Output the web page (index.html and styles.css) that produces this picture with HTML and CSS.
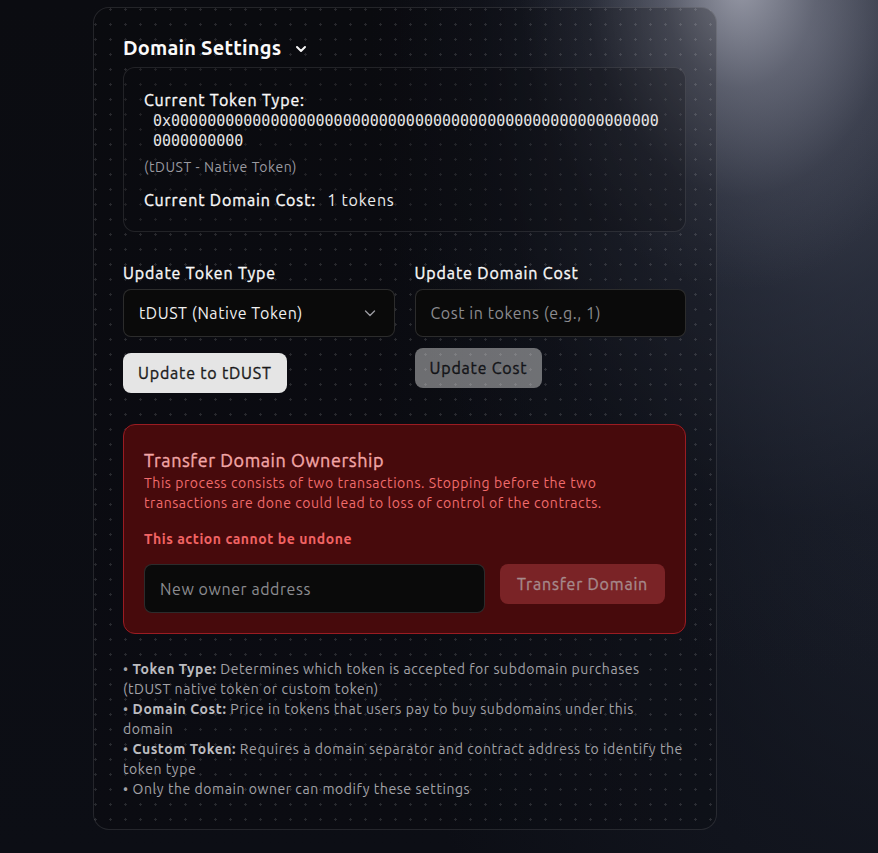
FILE: index.html
```html
<!DOCTYPE html>
<html lang="en">
<head>
<meta charset="utf-8">
<title>Domain Settings</title>
<link rel="stylesheet" href="styles.css">
</head>
<body>
<div class="page">
  <section class="card">
    <div class="card-head">
      <h2 class="card-title">Domain Settings</h2>
      <svg class="head-chevron" width="16" height="16" viewBox="0 0 16 16" fill="none" stroke="currentColor" stroke-width="2" stroke-linecap="round" stroke-linejoin="round"><path d="M4 6l4 4 4-4"/></svg>
    </div>

    <div class="current">
      <div class="cur-label medium">Current Token Type:</div>
      <div class="hex">0x0000000000000000000000000000000000000000000000000000000000000000</div>
      <div class="muted">(tDUST - Native Token)</div>
      <div class="cost-row"><span class="cur-label medium">Current Domain Cost:</span><span class="cost-value">1 tokens</span></div>
    </div>

    <div class="update-grid">
      <div class="col">
        <div class="field-label medium">Update Token Type</div>
        <div class="select">
          <span>tDUST (Native Token)</span>
          <svg width="14" height="14" viewBox="0 0 14 14" fill="none" stroke="currentColor" stroke-width="1.4" stroke-linecap="round" stroke-linejoin="round"><path d="M2.5 5l4.5 4.5L11.5 5"/></svg>
        </div>
        <button class="btn btn-light btn-token medium">Update to tDUST</button>
      </div>
      <div class="col">
        <div class="field-label medium">Update Domain Cost</div>
        <input class="input" type="text" placeholder="Cost in tokens (e.g., 1)">
        <button class="btn btn-light btn-disabled btn-cost medium">Update Cost</button>
      </div>
    </div>

    <div class="danger">
      <h3 class="danger-title medium">Transfer Domain Ownership</h3>
      <p class="danger-desc">This process consists of two transactions. Stopping before the two transactions are done could lead to loss of control of the contracts.</p>
      <p class="danger-warn">This action cannot be undone</p>
      <div class="danger-row">
        <input class="input owner-input" type="text" placeholder="New owner address">
        <button class="btn btn-transfer medium">Transfer Domain</button>
      </div>
    </div>

    <div class="notes">
      <p><span class="bullet">•</span><b>Token Type:</b> Determines which token is accepted for subdomain purchases (tDUST native token or custom token)</p>
      <p><span class="bullet">•</span><b>Domain Cost:</b> Price in tokens that users pay to buy subdomains under this domain</p>
      <p><span class="bullet">•</span><b>Custom Token:</b> Requires a domain separator and contract address to identify the token type</p>
      <p><span class="bullet">•</span>Only the domain owner can modify these settings</p>
    </div>
  </section>
</div>
</body>
</html>
```

FILE: styles.css
```css
* { box-sizing: border-box; }

html, body {
  margin: 0;
  padding: 0;
  height: 100%;
}

body {
  font-family: "Ubuntu", "Noto Sans", "Open Sans", sans-serif;
  letter-spacing: 0.035em;
  color: #f5f5f5;
  background-color: #0b0c11;
  background-image:
    radial-gradient(ellipse 220px 310px at 740px -20px, rgba(185,187,200,0.75) 0%, rgba(140,143,158,0.45) 35%, rgba(90,94,110,0.18) 70%, rgba(0,0,0,0) 100%),
    radial-gradient(ellipse 440px 640px at 810px 40px, rgba(80,84,100,0.75) 0%, rgba(50,55,70,0.55) 40%, rgba(26,30,42,0.25) 75%, rgba(14,17,26,0) 100%),
    radial-gradient(ellipse 520px 1100px at 900px 300px, rgba(32,37,50,0.9) 0%, rgba(22,26,37,0.6) 50%, rgba(14,17,26,0) 100%),
    linear-gradient(to bottom, #0b0c11, #0c0e15);
  overflow: hidden;
}

.page {
  padding: 7px 0 0 93px;
}

.card {
  width: 624px;
  border: 1px solid rgba(255,255,255,0.11);
  border-radius: 16px;
  padding: 26px 30px 30px 29px;
  background-color: rgba(8,9,13,0.25);
  background-image: radial-gradient(circle at 1.5px 1.5px, rgba(255,255,255,0.12) 1px, rgba(255,255,255,0) 1.3px);
  background-size: 15px 15px;
  background-position: 0 0;
}

.medium {
  -webkit-text-stroke: 0.35px currentColor;
}

.card-head {
  display: flex;
  align-items: center;
  gap: 12px;
  margin-bottom: 5px;
}

.card-title {
  margin: 0;
  font-size: 20px;
  line-height: 28px;
  font-weight: 700;
  letter-spacing: 0.01em;
  color: #fafafa;
}

.head-chevron { color: #f5f5f5; margin-top: 1px; }

.current {
  border: 1px solid rgba(255,255,255,0.10);
  border-radius: 12px;
  padding: 21px 20px 20px;
  background: rgba(10,10,14,0.25);
}

.cur-label {
  font-size: 16px;
  line-height: 22px;
  font-weight: 400;
  letter-spacing: 0.055em;
  color: #fafafa;
}

.hex {
  font-family: "DejaVu Sans Mono", monospace;
  letter-spacing: 0;
  font-size: 15px;
  line-height: 20px;
  color: #e5e5e5;
  margin-left: 9px;
  word-break: break-all;
}

.muted {
  margin-top: 6px;
  font-size: 14px;
  line-height: 20px;
  color: #9a9aa0;
}

.cost-row {
  margin-top: 12px;
  display: flex;
  align-items: baseline;
  gap: 11px;
}

.cost-value {
  font-size: 16px;
  line-height: 22px;
  letter-spacing: 0.05em;
  color: #ededed;
}

.update-grid {
  margin-top: 29px;
  display: grid;
  grid-template-columns: 1fr 1fr;
  column-gap: 20px;
  align-items: start;
}

.col {
  display: flex;
  flex-direction: column;
  align-items: flex-start;
}

.field-label {
  font-size: 16px;
  line-height: 24px;
  font-weight: 400;
  letter-spacing: 0.055em;
  color: #fafafa;
  margin-bottom: 4px;
}

.select {
  width: 100%;
  height: 48px;
  display: flex;
  align-items: center;
  justify-content: space-between;
  padding: 0 17px 0 15px;
  background: #0a0a0a;
  border: 1px solid rgba(255,255,255,0.14);
  border-radius: 8px;
  font-size: 16px;
  color: #f0f0f0;
}

.select svg { color: #9a9aa0; }

.input {
  width: 100%;
  height: 48px;
  padding: 0 15px;
  background: #0a0a0a;
  border: 1px solid rgba(255,255,255,0.14);
  border-radius: 8px;
  font-family: inherit;
  letter-spacing: inherit;
  font-size: 16px;
  color: #f0f0f0;
  outline: none;
}

.input::placeholder { color: #8c8c90; }

.btn {
  font-family: inherit;
  letter-spacing: 0.05em;
  font-size: 16px;
  font-weight: 400;
  height: 40px;
  padding: 0 15px;
  border: none;
  border-radius: 8px;
  cursor: pointer;
}

.btn-light {
  background: #e5e5e5;
  color: #1a1a1a;
}

.btn-token { margin-top: 16px; }

.btn-cost { margin-top: 11px; }

.btn-disabled {
  opacity: 0.45;
}

.danger {
  margin-top: 31px;
  background: #470a0c;
  border: 1px solid #9b1c22;
  border-radius: 12px;
  padding: 22px 20px 20px;
}

.danger-title {
  margin: 0;
  font-size: 18px;
  line-height: 26px;
  font-weight: 400;
  color: #f3a7a7;
}

.danger-desc {
  margin: 0;
  font-size: 14px;
  line-height: 20px;
  color: #f26c6c;
}

.danger-warn {
  margin: 16px 0 0;
  font-size: 14px;
  line-height: 20px;
  font-weight: 700;
  color: #f26464;
}

.danger-row {
  margin-top: 15px;
  display: flex;
  align-items: flex-start;
  gap: 15px;
}

.owner-input {
  flex: 1;
  height: 49px;
}

.btn-transfer {
  flex: none;
  width: 165px;
  background: #7a2326;
  color: #a68a8c;
}

.notes {
  margin-top: 25px;
  font-size: 14px;
  line-height: 20px;
  color: #a3a3a8;
}

.notes p { margin: 0; }

.bullet {
  display: inline-block;
  margin-right: 4px;
}

.notes b { color: #bcbcc0; font-weight: 700; }
```
